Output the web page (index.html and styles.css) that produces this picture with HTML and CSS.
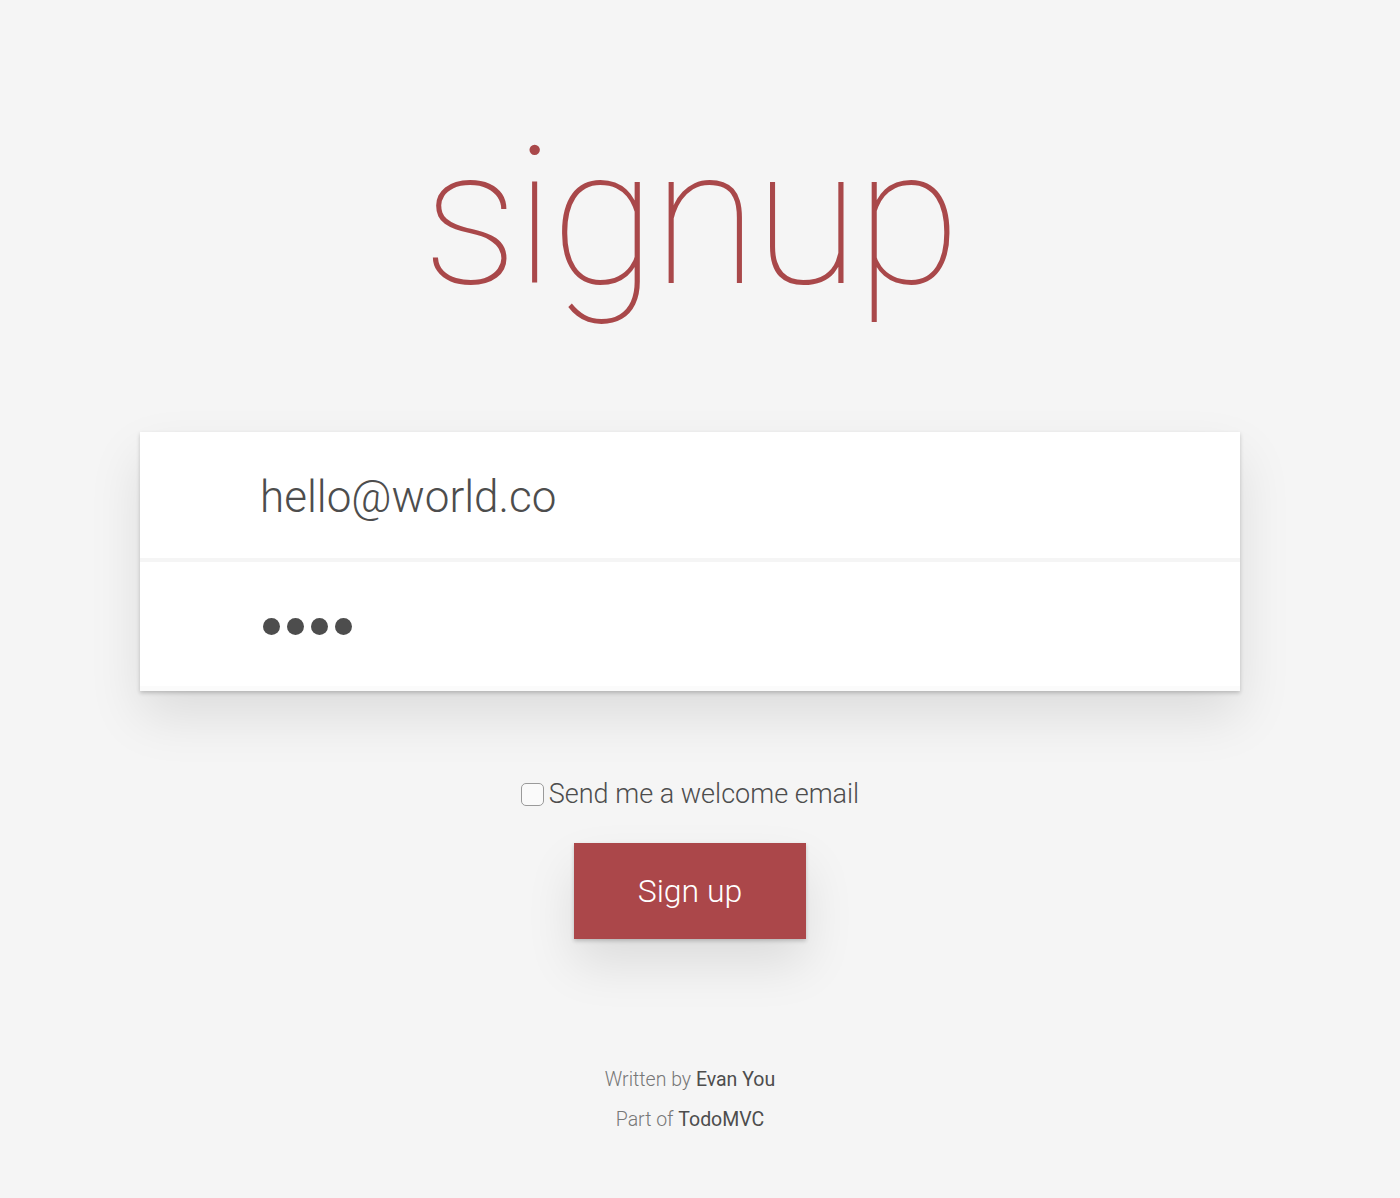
FILE: index.html
```html
<!DOCTYPE html>
<html>
<head>
<meta charset="utf-8">
<link rel="stylesheet" href="styles.css">
</head>
<body>
<main class="page">
  <h1 class="title">signup</h1>
  <form class="card">
    <div class="field"><input class="field-input" type="text" value="hello@world.co"></div>
    <div class="field field-pass"><span class="dots"><i></i><i></i><i></i><i></i></span></div>
  </form>
  <label class="opt"><span class="box"></span><span class="opt-text">Send me a welcome email</span></label>
  <button class="btn" type="button">Sign up</button>
  <footer class="foot">
    <p>Written by <span class="strong">Evan You</span></p>
    <p>Part of <span class="strong">TodoMVC</span></p>
  </footer>
</main>
</body>
</html>
```
FILE: styles.css
```css
html, body { margin: 0; padding: 0; }
body {
  background: #f5f5f5;
  font-family: Roboto, "Liberation Sans", sans-serif;
  color: #4d4d4d;
  height: 1198px;
  width: 1380px;
  overflow: hidden;
}
.page {
  width: 1100px;
  margin: 0 auto;
  display: flex;
  flex-direction: column;
  align-items: center;
}
.title {
  margin: 98px 0 0;
  font-size: 192px;
  font-weight: 100;
  color: #a9484a;
  line-height: 240px;
  letter-spacing: -3.5px;
  height: 240px;
}
.card {
  margin-top: 94px;
  width: 1100px;
  background: #fff;
  box-shadow: 0 2px 4px rgba(0,0,0,0.2), 0 25px 50px 0 rgba(0,0,0,0.1);
  display: flex;
  flex-direction: column;
}
.field {
  height: 126px;
  display: flex;
  align-items: center;
  padding-left: 120px;
}
.field + .field { border-top: 4px solid #f5f5f5; height: 129px; box-shadow: inset 0 -5px 0 #fbfbfb; }
.field-input {
  border: 0;
  outline: 0;
  background: transparent;
  font-family: Roboto, "Liberation Sans", sans-serif;
  font-weight: 300;
  font-size: 44px;
  color: #4d4d4d;
  padding: 4px 0 0;
  width: 900px;
}
.dots { display: flex; gap: 7px; margin-left: 3px; }
.dots i { width: 17px; height: 17px; border-radius: 50%; background: #4d4d4d; display: block; }
.opt {
  margin-top: 88px;
  display: flex;
  align-items: center;
  gap: 5px;
}
.box {
  width: 21px; height: 21px;
  border: 1px solid #9a9a9a;
  border-radius: 5px;
  background: #fafafa;
}
.opt-text { font-size: 27px; font-weight: 300; color: #4d4d4d; line-height: 30px; }
.btn {
  margin-top: 34px;
  width: 232px;
  height: 96px;
  border: 0;
  background: #ab474a;
  color: #fff;
  font-family: Roboto, "Liberation Sans", sans-serif;
  font-weight: 300;
  font-size: 32px;
  box-shadow: 0 2px 4px rgba(0,0,0,0.2), 0 25px 50px 0 rgba(0,0,0,0.1);
  padding: 0;
}
.foot { margin-top: 121px; text-align: center; font-size: 19.5px; font-weight: 300; color: #777; }
.foot p { margin: 0; line-height: 40px; }
.strong { color: #4d4d4d; font-weight: 400; }
```
